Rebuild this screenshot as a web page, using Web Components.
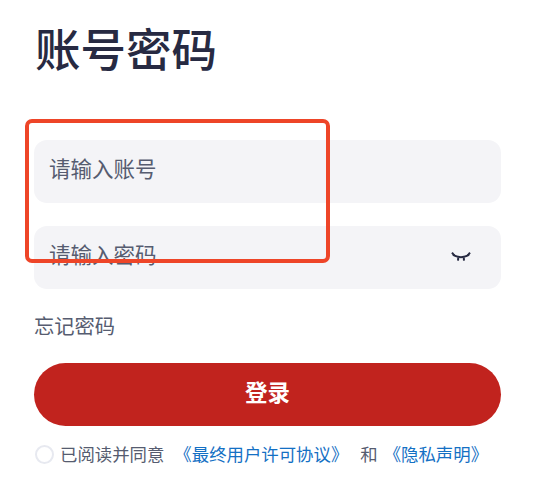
<!DOCTYPE html>
<html lang="zh-CN">
<head>
<meta charset="utf-8">
<style>
html,body{margin:0;padding:0;background:#fff;height:100%;overflow:hidden}
body{font-family:"Noto Sans CJK SC","Noto Sans",sans-serif}
</style>
</head>
<body>
<login-page>
  <login-title slot="title">账号密码</login-title>
  <login-field>请输入账号</login-field>
  <login-field eye>请输入密码</login-field>
  <login-forgot>忘记密码</login-forgot>
  <login-button>登录</login-button>
  <login-agree></login-agree>
</login-page>
<annot-box></annot-box>
<script>
function def(name, html, init){
  customElements.define(name, class extends HTMLElement{
    constructor(){super();this.attachShadow({mode:'open'}).innerHTML=html;}
    connectedCallback(){if(init)init(this);}
  });
}
def('login-page',`<style>
:host{display:flex;flex-direction:column;box-sizing:border-box;width:535px;height:490px;padding:0 34px;color:#272a42}
.f{display:flex;flex-direction:column}
</style><slot name="title"></slot><div class="f"><slot></slot></div>`);
def('login-title',`<style>
:host{display:block;height:140px;box-sizing:border-box;padding-top:13px;padding-left:1px;font-size:45.5px;line-height:68px;font-weight:500;color:#272a42}
</style><slot></slot>`);
def('login-field',`<style>
:host{display:flex;align-items:center;justify-content:space-between;box-sizing:border-box;height:63px;margin-bottom:23px;padding:0 30px 0 15px;background:#f4f4f7;border-radius:13px;font-size:21.5px;color:#565c70}
span{display:block;transform:translateY(-4px)}
svg{display:none;width:20px;height:12px}
:host([eye]) svg{display:block;transform:translateY(-1px)}
</style><span><slot></slot></span>
<svg viewBox="0 0 20 12" fill="none" stroke="#272a42" stroke-width="2" stroke-linecap="butt">
<path d="M2 3.6C6 7 14 7 18 3.6"/><path d="M1 1.6L3.4 4.6M19 1.6L16.6 4.6M7.3 6.4L7 9.6M12.7 6.4L13 9.6"/></svg>`);
def('login-forgot',`<style>
:host{display:block;height:57px;margin-top:-6px;padding-top:2px;box-sizing:border-box;font-size:20.3px;line-height:34px;color:#565c70}
</style><slot></slot>`);
def('login-button',`<style>
:host{display:flex;align-items:center;justify-content:center;height:63px;border-radius:32px;background:#c1231e;color:#fff;font-size:22.5px;font-weight:700}
span{display:block;transform:translateY(-4px)}
</style><span><slot></slot></span>`);
def('login-agree',`<style>
:host{display:flex;align-items:center;height:28px;margin-top:13px;font-size:17.4px;color:#565c70;white-space:nowrap}
.c{width:15px;height:15px;border:2px solid #e7e9f0;border-radius:50%;margin:3px 6px 0 1px;flex:none;background:#fff}
a{color:#1470c4;text-decoration:none}
.l1{margin-left:10px}.h{margin:0 6px 0 12px}
</style><span class="c"></span><span>已阅读并同意</span><a class="l1">《最终用户许可协议》</a><span class="h">和</span><a>《隐私声明》</a>`);
def('annot-box',`<style>
:host{display:block;position:absolute;left:25px;top:119px;width:305px;height:144px;box-sizing:border-box;border:4px solid #ee4528;border-radius:7px;pointer-events:none}
</style>`);
</script>
</body>
</html>
